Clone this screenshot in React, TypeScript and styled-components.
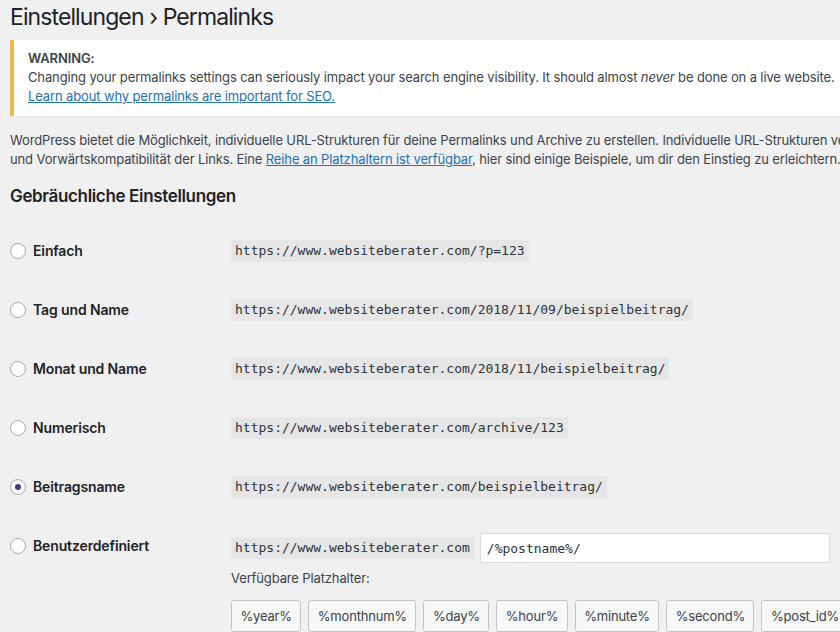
import React, { useState } from "react";
import styled, { createGlobalStyle } from "styled-components";

const GlobalStyle = createGlobalStyle`
  html, body {
    margin: 0;
    padding: 0;
    background: #f0f0f1;
    overflow: hidden;
  }
  body {
    font-family: Inter, "Noto Sans", sans-serif;
    font-size: 13px;
    letter-spacing: -0.13px;
    color: #3c434a;
  }
`;

const Wrap = styled.div`
  width: 1200px;
  padding-left: 10px;
  box-sizing: border-box;
`;

const Title = styled.h1`
  margin: 0;
  padding: 3px 0 0;
  height: 40px;
  box-sizing: border-box;
  font-size: 23px;
  font-weight: 400;
  letter-spacing: -0.9px;
  line-height: 29px;
  color: #1d2327;
`;

const Notice = styled.div`
  background: #fff;
  border-left: 4px solid #efb84a;
  box-shadow: 0 1px 1px rgba(0, 0, 0, 0.04);
  padding: 9px 14px 10px;
  line-height: 19px;
  color: #3c434a;
`;

const NoticeHead = styled.div`
  font-weight: 600;
`;

const Link = styled.a`
  color: #2271b1;
  text-decoration: underline;
`;

const Intro = styled.p`
  margin: 15px 0 0;
  line-height: 19px;
`;

const Heading = styled.h2`
  margin: 15px 0 0;
  font-size: 17px;
  font-weight: 600;
  letter-spacing: -0.35px;
  line-height: 24px;
  color: #1d2327;
`;

const Table = styled.div`
  margin-top: 13px;
`;

const Row = styled.div<{ $custom?: boolean }>`
  display: grid;
  grid-template-columns: 221px 1fr;
  align-items: ${(p) => (p.$custom ? "start" : "center")};
  min-height: 59px;
`;

const Label = styled.label`
  display: flex;
  align-items: center;
  gap: 7px;
  height: 59px;
  font-size: 14px;
  font-weight: 600;
  color: #1d2327;
  cursor: pointer;
`;

const Radio = styled.span<{ $checked: boolean }>`
  width: 16px;
  height: 16px;
  border-radius: 50%;
  border: 1px solid #a7aaad;
  background: #fff;
  box-sizing: border-box;
  display: flex;
  align-items: center;
  justify-content: center;
  &::after {
    content: "";
    width: 6px;
    height: 6px;
    border-radius: 50%;
    background: ${(p) => (p.$checked ? "#3f3d7c" : "transparent")};
  }
`;

const Code = styled.code`
  display: inline-block;
  justify-self: start;
  background: #e6e6e6;
  padding: 2px 4px;
  font-family: "DejaVu Sans Mono", "Liberation Mono", monospace;
  font-size: 13px;
  letter-spacing: 0;
  line-height: 18px;
  color: #2c3338;
`;

const CustomCell = styled.div`
  padding-top: 17px;
`;

const InputLine = styled.div`
  display: flex;
  align-items: center;
  gap: 6px;
`;

const Input = styled.input`
  width: 350px;
  height: 30px;
  box-sizing: border-box;
  border: 1px solid #dcdcde;
  border-radius: 0;
  background: #fff;
  padding: 0 6px;
  font-family: "DejaVu Sans Mono", "Liberation Mono", monospace;
  font-size: 13px;
  color: #2c3338;
  outline: none;
`;

const Hint = styled.div`
  margin-top: 6px;
  line-height: 18px;
  color: #3c434a;
`;

const Tags = styled.div`
  display: flex;
  gap: 7px;
  margin-top: 13px;
`;

const TagButton = styled.button`
  height: 32px;
  padding: 0 8.5px;
  border: 1px solid #c3c4c7;
  border-radius: 3px;
  background: #f6f7f7;
  font-family: Inter, "Noto Sans", sans-serif;
  font-size: 13px;
  letter-spacing: -0.2px;
  color: #3c434a;
`;

const options = [
  { label: "Einfach", url: "https://www.websiteberater.com/?p=123" },
  { label: "Tag und Name", url: "https://www.websiteberater.com/2018/11/09/beispielbeitrag/" },
  { label: "Monat und Name", url: "https://www.websiteberater.com/2018/11/beispielbeitrag/" },
  { label: "Numerisch", url: "https://www.websiteberater.com/archive/123" },
  { label: "Beitragsname", url: "https://www.websiteberater.com/beispielbeitrag/" },
];

const tags = ["%year%", "%monthnum%", "%day%", "%hour%", "%minute%", "%second%", "%post_id%"];

const App: React.FC = () => {
  const [selected, setSelected] = useState("Beitragsname");
  const [structure, setStructure] = useState("/%postname%/");

  return (
    <Wrap>
      <GlobalStyle />
      <Title>Einstellungen › Permalinks</Title>
      <Notice>
        <NoticeHead>WARNING:</NoticeHead>
        <div>
          Changing your permalinks settings can seriously impact your search engine visibility. It
          should almost <em>never</em> be done on a live website.
        </div>
        <Link href="#">Learn about why permalinks are important for SEO.</Link>
      </Notice>

      <Intro>
        WordPress bietet die Möglichkeit, individuelle URL-Strukturen für deine Permalinks und
        Archive zu erstellen. Individuelle URL-Strukturen verbessern die Ästhetik,
        Benutzerfreundlichkeit
        <br />
        und Vorwärtskompatibilität der Links. Eine <Link href="#">Reihe an Platzhaltern ist verfügbar</Link>,
        hier sind einige Beispiele, um dir den Einstieg zu erleichtern.
      </Intro>

      <Heading>Gebräuchliche Einstellungen</Heading>

      <Table>
        {options.map((o) => (
          <Row key={o.label}>
            <Label onClick={() => setSelected(o.label)}>
              <Radio $checked={selected === o.label} />
              {o.label}
            </Label>
            <Code>{o.url}</Code>
          </Row>
        ))}
        <Row $custom>
          <Label onClick={() => setSelected("Benutzerdefiniert")}>
            <Radio $checked={selected === "Benutzerdefiniert"} />
            Benutzerdefiniert
          </Label>
          <CustomCell>
            <InputLine>
              <Code>https://www.websiteberater.com</Code>
              <Input value={structure} onChange={(e) => setStructure(e.target.value)} />
            </InputLine>
            <Hint>Verfügbare Platzhalter:</Hint>
            <Tags>
              {tags.map((t) => (
                <TagButton key={t}>{t}</TagButton>
              ))}
            </Tags>
          </CustomCell>
        </Row>
      </Table>
    </Wrap>
  );
};

export default App;
